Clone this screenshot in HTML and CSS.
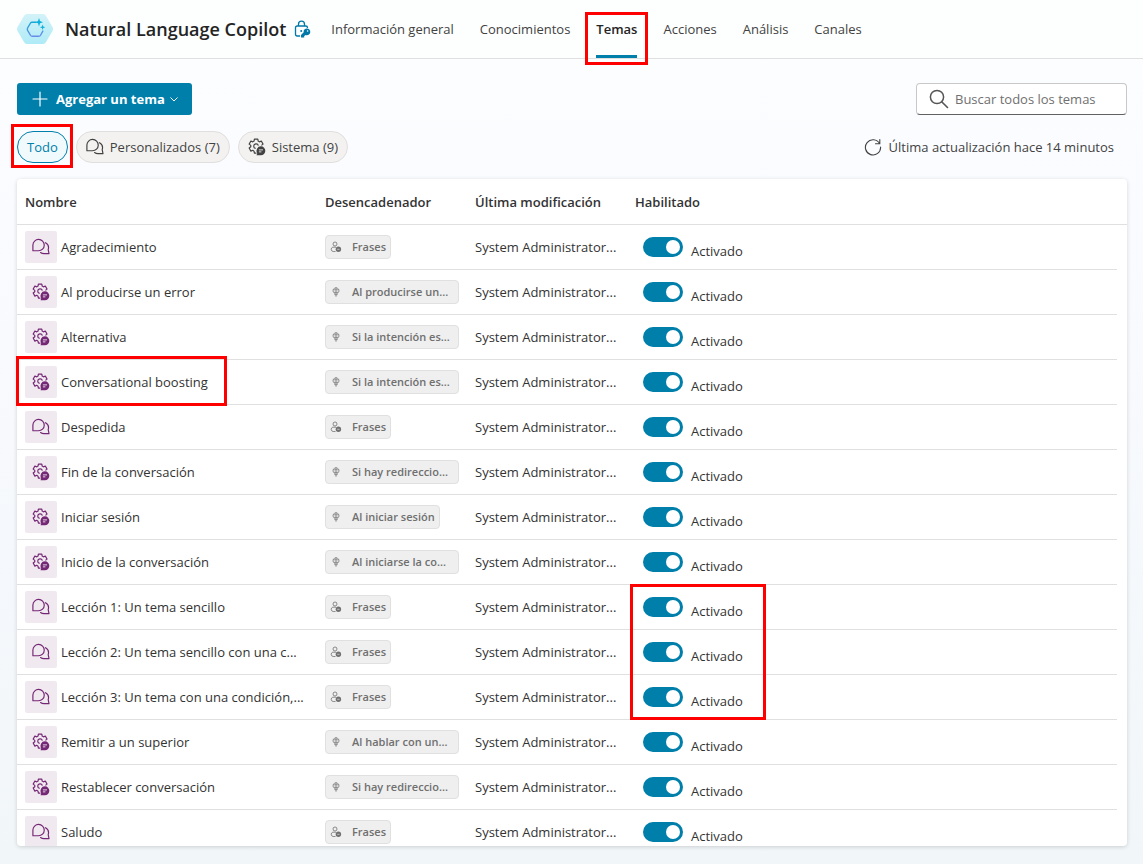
FILE: index.html
```html
<!DOCTYPE html>
<html lang="es">
<head>
  <meta charset="UTF-8" />
  <title>Natural Language Copilot - Temas</title>
  <link rel="stylesheet" href="styles.css">
</head>
<body>

  <!-- Shared icons -->
  <svg class="sprite" aria-hidden="true">
    <symbol id="icon-chat" viewBox="0 0 20 20">
      <path d="M1 14.200V7.800A6.300 6.300 0 1 1 7.300 14.200z" fill="none" stroke="currentColor" stroke-width="1.300" stroke-linejoin="round" />
      <path d="M15 5.200a6.500 6.500 0 0 1 3 7.600l.9 4.600H13.500a6.500 6.500 0 0 1-4-1.200" fill="none" stroke="currentColor" stroke-width="1.300" stroke-linejoin="round" stroke-linecap="round" />
    </symbol>
    <symbol id="icon-system" viewBox="0 0 20 20">
      <path d="M9.400 16.800H7.100L6.700 14.600 5.300 13.700 3.200 14.600 1.300 11.200 3.100 9.800V8.200L1.300 6.800 3.200 3.400 5.300 4.300 6.700 3.400 7.100 1.200h3.800l.4 2.200 1.400.9 2.100-.9 1.900 3.400-1.800 1.400" fill="none" stroke="currentColor" stroke-width="1.300" stroke-linejoin="round" />
      <path d="M8.500 11.600A2.600 2.600 0 1 1 11.500 8.500" fill="none" stroke="currentColor" stroke-width="1.300" />
      <path d="M14.400 9.300a4.900 4.900 0 1 1-.1 9.800H9.500l.7-2.200A4.900 4.900 0 0 1 14.400 9.300z" fill="currentColor" />
      <path d="M12.100 13.200h4.600M12.100 15.400h2.800" stroke="#fff" stroke-width=".9" />
    </symbol>
    <symbol id="icon-phrases" viewBox="0 0 12 12">
      <circle cx="5" cy="3" r="2" fill="none" stroke="currentColor" stroke-width=".8" />
      <path d="M5.500 10.500H3.200a2.200 2.200 0 0 1-.4-4.300H6" fill="none" stroke="currentColor" stroke-width=".8" />
      <circle cx="8.400" cy="8.300" r="2.700" fill="currentColor" />
      <path d="M7.200 8.300h2.400" stroke="#efefef" stroke-width=".6" />
    </symbol>
    <symbol id="icon-event" viewBox="0 0 12 12">
      <path d="M3.400 6.300a3 3 0 1 1 5.200 0H3.400zM3.100 3.800h5.800M6 1.200v9.600M4.800 6.400v2.400h2.400V6.400" fill="none" stroke="currentColor" stroke-width=".7" />
    </symbol>
  </svg>

  <header class="header">
    <svg class="logo" viewBox="0 0 36 32" aria-hidden="true">
      <defs>
        <linearGradient id="hex" x1="0" y1="0" x2="0" y2="1"><stop offset="0" stop-color="#d3f2f8" /><stop offset="1" stop-color="#aeebf7" /></linearGradient>
        <linearGradient id="ring" x1="0" y1="0" x2="0" y2="1"><stop offset="0" stop-color="#19a7d8" /><stop offset="1" stop-color="#6a8ce8" /></linearGradient>
      </defs>
      <path d="M10 1h16q2 0 3 2l6.500 11q1 2 0 4L29 29q-1 2-3 2H10q-2 0-3-2L.5 18q-1-2 0-4L7 3q1-2 3-2z" fill="url(#hex)" />
      <path d="M19 9.200h-4q-1 0-1.500.8L10.600 15q-.6 1.200 0 2.300l3 5.200q.5.800 1.500.8h6.800q1 0 1.500-.8l2.500-4.500" fill="none" stroke="url(#ring)" stroke-width="1.400" stroke-linecap="round" />
      <path d="M22 5l1 3 3 1.200-3 1.100-1 3.200-1-3.200-3-1.100L21 8zM25.600 11.500l.7 2 2 .8-2 .7-.7 2-.7-2-2-.7 2-.8z" fill="#0eb0dc" />
    </svg>
    <h1>Natural Language Copilot</h1>
    <svg class="lock" viewBox="0 0 18 18" aria-hidden="true">
      <path d="M7 16H4.200Q2.500 16 2.500 14.300V7.700Q2.500 6 4.200 6h8.600q1.700 0 1.700 1.700V8M5.500 6V4.200a3 3 0 0 1 6 0V6" fill="none" stroke="currentColor" stroke-width="1.300" />
      <circle cx="8.200" cy="11" r="1" fill="currentColor" />
      <path d="M13.500 8.600a3.300 3.300 0 1 1-.8 6.300L11.200 16v1.500H8v-2.600l2.700-2.600a3.300 3.300 0 0 1 2.800-3.700z" fill="currentColor" />
      <circle cx="14.600" cy="11" r=".8" fill="#fff" />
    </svg>
    <nav class="tabs">
      <a href="#">Información general</a>
      <a href="#">Conocimientos</a>
      <a href="#" class="active mark mark-tab" aria-current="page">Temas</a>
      <a href="#">Acciones</a>
      <a href="#">Análisis</a>
      <a href="#">Canales</a>
    </nav>
  </header>

  <main>
    <div class="toolbar">
      <button class="add">
        <svg width="16" height="16" viewBox="0 0 16 16"><path d="M8 1v14M1 8h14" stroke="#fff" stroke-width="1.200" stroke-linecap="round" /></svg>
        Agregar un tema
        <svg width="8" height="8" viewBox="0 0 8 8"><path d="M.5 2.500L4 6l3.500-3.500" fill="none" stroke="#fff" /></svg>
      </button>
      <div class="search">
        <svg width="20" height="20" viewBox="0 0 20 20"><path d="M12.700 12.700L18.500 18.500" stroke="#555" stroke-width="1.600" stroke-linecap="round" /><circle cx="8" cy="8" r="6.600" fill="none" stroke="#555" stroke-width="1.500" /></svg>
        <input type="text" placeholder="Buscar todos los temas" aria-label="Buscar todos los temas" />
      </div>
    </div>

    <div class="filters">
      <button class="pill selected mark mark-pill">Todo</button>
      <button class="pill"><svg class="icon"><use href="#icon-chat" /></svg>Personalizados (7)</button>
      <button class="pill"><svg class="icon"><use href="#icon-system" /></svg>Sistema (9)</button>
      <button class="refresh">
        <svg width="18" height="18" viewBox="0 0 18 18"><path d="M15.600 5.600A7.600 7.600 0 1 0 16.600 9M15.800 1.500v4.300h-4.300" fill="none" stroke="currentColor" stroke-width="1.100" stroke-linecap="round" /></svg>
        Última actualización hace 14 minutos
      </button>
    </div>

    <div class="card">
      <table>
        <colgroup>
          <col class="col-name">
          <col class="col-trigger">
          <col class="col-modified">
          <col>
          <col class="col-gutter">
        </colgroup>
        <thead>
          <tr>
            <th>Nombre</th>
            <th>Desencadenador</th>
            <th>Última modificación</th>
            <th>Habilitado</th>
            <th></th>
          </tr>
        </thead>
        <tbody>
          <tr>
            <td><div class="name"><span class="tile"><svg class="icon"><use href="#icon-chat" /></svg></span>Agradecimiento</div></td>
            <td><span class="chip"><svg><use href="#icon-phrases" /></svg>Frases</span></td>
            <td>System Administrator...</td>
            <td><div class="toggle"><input type="checkbox" role="switch" id="t1" checked /><label for="t1">Activado</label></div></td>
            <td></td>
          </tr>
          <tr>
            <td><div class="name"><span class="tile"><svg class="icon"><use href="#icon-system" /></svg></span>Al producirse un error</div></td>
            <td><span class="chip wide"><svg><use href="#icon-event" /></svg>Al producirse un...</span></td>
            <td>System Administrator...</td>
            <td><div class="toggle"><input type="checkbox" role="switch" id="t2" checked /><label for="t2">Activado</label></div></td>
            <td></td>
          </tr>
          <tr>
            <td><div class="name"><span class="tile"><svg class="icon"><use href="#icon-system" /></svg></span>Alternativa</div></td>
            <td><span class="chip wide"><svg><use href="#icon-event" /></svg>Si la intención es...</span></td>
            <td>System Administrator...</td>
            <td><div class="toggle"><input type="checkbox" role="switch" id="t3" checked /><label for="t3">Activado</label></div></td>
            <td></td>
          </tr>
          <tr>
            <td><div class="name mark mark-name"><span class="tile"><svg class="icon"><use href="#icon-system" /></svg></span>Conversational boosting</div></td>
            <td><span class="chip wide"><svg><use href="#icon-event" /></svg>Si la intención es...</span></td>
            <td>System Administrator...</td>
            <td><div class="toggle"><input type="checkbox" role="switch" id="t4" checked /><label for="t4">Activado</label></div></td>
            <td></td>
          </tr>
          <tr>
            <td><div class="name"><span class="tile"><svg class="icon"><use href="#icon-chat" /></svg></span>Despedida</div></td>
            <td><span class="chip"><svg><use href="#icon-phrases" /></svg>Frases</span></td>
            <td>System Administrator...</td>
            <td><div class="toggle"><input type="checkbox" role="switch" id="t5" checked /><label for="t5">Activado</label></div></td>
            <td></td>
          </tr>
          <tr>
            <td><div class="name"><span class="tile"><svg class="icon"><use href="#icon-system" /></svg></span>Fin de la conversación</div></td>
            <td><span class="chip wide"><svg><use href="#icon-event" /></svg>Si hay redireccio...</span></td>
            <td>System Administrator...</td>
            <td><div class="toggle"><input type="checkbox" role="switch" id="t6" checked /><label for="t6">Activado</label></div></td>
            <td></td>
          </tr>
          <tr>
            <td><div class="name"><span class="tile"><svg class="icon"><use href="#icon-system" /></svg></span>Iniciar sesión</div></td>
            <td><span class="chip"><svg><use href="#icon-event" /></svg>Al iniciar sesión</span></td>
            <td>System Administrator...</td>
            <td><div class="toggle"><input type="checkbox" role="switch" id="t7" checked /><label for="t7">Activado</label></div></td>
            <td></td>
          </tr>
          <tr>
            <td><div class="name"><span class="tile"><svg class="icon"><use href="#icon-system" /></svg></span>Inicio de la conversación</div></td>
            <td><span class="chip wide"><svg><use href="#icon-event" /></svg>Al iniciarse la co...</span></td>
            <td>System Administrator...</td>
            <td><div class="toggle"><input type="checkbox" role="switch" id="t8" checked /><label for="t8">Activado</label></div></td>
            <td></td>
          </tr>
          <tr>
            <td><div class="name"><span class="tile"><svg class="icon"><use href="#icon-chat" /></svg></span>Lección 1: Un tema sencillo</div></td>
            <td><span class="chip"><svg><use href="#icon-phrases" /></svg>Frases</span></td>
            <td>System Administrator...</td>
            <td><div class="toggle mark mark-toggles"><input type="checkbox" role="switch" id="t9" checked /><label for="t9">Activado</label></div></td>
            <td></td>
          </tr>
          <tr>
            <td><div class="name"><span class="tile"><svg class="icon"><use href="#icon-chat" /></svg></span>Lección 2: Un tema sencillo con una c...</div></td>
            <td><span class="chip"><svg><use href="#icon-phrases" /></svg>Frases</span></td>
            <td>System Administrator...</td>
            <td><div class="toggle"><input type="checkbox" role="switch" id="t10" checked /><label for="t10">Activado</label></div></td>
            <td></td>
          </tr>
          <tr>
            <td><div class="name"><span class="tile"><svg class="icon"><use href="#icon-chat" /></svg></span>Lección 3: Un tema con una condición,...</div></td>
            <td><span class="chip"><svg><use href="#icon-phrases" /></svg>Frases</span></td>
            <td>System Administrator...</td>
            <td><div class="toggle"><input type="checkbox" role="switch" id="t11" checked /><label for="t11">Activado</label></div></td>
            <td></td>
          </tr>
          <tr>
            <td><div class="name"><span class="tile"><svg class="icon"><use href="#icon-system" /></svg></span>Remitir a un superior</div></td>
            <td><span class="chip wide"><svg><use href="#icon-event" /></svg>Al hablar con un...</span></td>
            <td>System Administrator...</td>
            <td><div class="toggle"><input type="checkbox" role="switch" id="t12" checked /><label for="t12">Activado</label></div></td>
            <td></td>
          </tr>
          <tr>
            <td><div class="name"><span class="tile"><svg class="icon"><use href="#icon-system" /></svg></span>Restablecer conversación</div></td>
            <td><span class="chip wide"><svg><use href="#icon-event" /></svg>Si hay redireccio...</span></td>
            <td>System Administrator...</td>
            <td><div class="toggle"><input type="checkbox" role="switch" id="t13" checked /><label for="t13">Activado</label></div></td>
            <td></td>
          </tr>
          <tr>
            <td><div class="name"><span class="tile"><svg class="icon"><use href="#icon-chat" /></svg></span>Saludo</div></td>
            <td><span class="chip"><svg><use href="#icon-phrases" /></svg>Frases</span></td>
            <td>System Administrator...</td>
            <td><div class="toggle"><input type="checkbox" role="switch" id="t14" checked /><label for="t14">Activado</label></div></td>
            <td></td>
          </tr>
        </tbody>
      </table>
    </div>
  </main>

</body>
</html>
```
FILE: styles.css
```css
*, *::before, *::after {
  box-sizing: border-box;
}
body {
  margin: 0;
  height: 100vh;
  display: flex;
  flex-direction: column;
  font-family: "Open Sans", "Noto Sans", sans-serif;
  font-size: 13px;
  line-height: 20px;
  color: #333;
  background: linear-gradient(#fdfeff, #fafbff 25%, #f1f6f9);
}
button, input {
  font: inherit;
  color: inherit;
}
button {
  cursor: pointer;
}
.sprite {
  position: absolute;
  width: 0;
  height: 0;
}
.icon {
  width: 18px;
  height: 18px;
}

/* Header */
.header {
  display: flex;
  align-items: center;
  flex: none;
  height: 59px;
  padding-left: 17px;
  border-bottom: 1px solid #e0e0e0;
  background: #fdfefe;
}
.logo {
  width: 36px;
  height: 32px;
}
h1 {
  margin: 0 7px 0 12px;
  font-size: 18px;
  line-height: 24px;
  font-weight: 600;
  color: #242424;
  white-space: nowrap;
}
.lock {
  width: 18px;
  height: 18px;
  color: #0078a8;
}
.tabs {
  display: flex;
  gap: 26px;
  margin-left: 20px;
}
.tabs a {
  padding: 19px 0;
  line-height: 20px;
  color: #424242;
  text-decoration: none;
  white-space: nowrap;
}
.tabs .active {
  font-weight: 600;
  color: #242424;
  box-shadow: inset 0 -3px #007fab;
}

/* Red callout frames */
.mark {
  position: relative;
}
.mark::after {
  content: "";
  position: absolute;
  z-index: 1;
  border: 3px solid #f00;
  pointer-events: none;
}
.mark-tab::after {
  inset: 12px -11px -7px;
}
.mark-pill::after {
  inset: -8px -6px -6px -7px;
}
.mark-name::after {
  inset: -10px auto -8px -9px;
  width: 211px;
}
.mark-toggles::after {
  top: -13px;
  left: -13px;
  width: 136px;
  height: 136px;
}

/* Actions */
main {
  flex: 1;
  min-height: 0;
  display: flex;
  flex-direction: column;
  gap: 16px;
  padding: 24px 16px 18px 17px;
}
.toolbar {
  display: flex;
  justify-content: space-between;
}
.add {
  display: flex;
  align-items: center;
  height: 32px;
  padding: 0 14px 0 15px;
  border: none;
  border-radius: 3px;
  background: #007fab;
  color: #fff;
  font-weight: 700;
}
.add svg:first-child {
  margin-right: 8px;
}
.add svg:last-child {
  margin-left: 5px;
}
.search {
  display: flex;
  align-items: center;
  gap: 6px;
  width: 211px;
  height: 32px;
  padding: 0 12px;
  border: 1px solid #c8c8c8;
  border-bottom-color: #616161;
  border-radius: 4px;
  background: #fff;
}
.search svg {
  flex: none;
}
.search input {
  width: 100%;
  min-width: 0;
  padding: 0;
  border: none;
  outline: none;
  background: none;
}
.search input::placeholder {
  color: #707070;
}
.filters {
  display: flex;
  gap: 8px;
}
.pill {
  display: flex;
  align-items: center;
  gap: 6px;
  height: 32px;
  padding: 0 9px;
  border: 1px solid #e1dfdd;
  border-radius: 16px;
  background: #f3f2f1;
  color: #424242;
}
.pill.selected {
  border-color: #007fab;
  background: #f0f9fc;
  color: #007fab;
}
.refresh {
  display: flex;
  align-items: center;
  gap: 7px;
  margin-left: auto;
  padding: 0 13px;
  border: none;
  background: none;
  color: #424242;
}

/* Topics table */
.card {
  flex: 1;
  min-height: 0;
  overflow: visible clip;
  border-radius: 4px;
  background: #fff;
  box-shadow: 0 1px 4px rgba(0, 0, 0, 0.16);
}
table {
  width: 100%;
  table-layout: fixed;
  border-collapse: separate;
  border-spacing: 0;
}
.col-name {
  width: 300px;
}
.col-trigger {
  width: 150px;
}
.col-modified {
  width: 160px;
}
.col-gutter {
  width: 10px;
}
th, td {
  height: 45px;
  padding: 0 8px;
  border-bottom: 1px solid #e0e0e0;
  text-align: left;
  white-space: nowrap;
}
th {
  height: 46px;
  font-weight: 600;
}
th:last-child, td:last-child {
  padding: 0;
}
td:last-child {
  border-bottom: none;
}
.name {
  display: flex;
  align-items: center;
  gap: 4px;
}
.tile {
  display: flex;
  align-items: center;
  justify-content: center;
  width: 32px;
  height: 32px;
  border-radius: 2px;
  background: #f1e9f0;
  color: #742774;
}
.chip {
  display: flex;
  align-items: center;
  gap: 10px;
  width: fit-content;
  height: 24px;
  padding: 0 4px;
  border: 1px solid #e0e0e0;
  border-radius: 4px;
  background: #efefef;
  color: #707070;
  font-size: 11px;
  font-weight: 600;
}
.chip.wide {
  width: 134px;
}
.chip svg {
  width: 12px;
  height: 12px;
}
.toggle {
  display: flex;
  gap: 8px;
  margin-left: 8px;
}
.toggle input {
  appearance: none;
  width: 40px;
  height: 20px;
  margin: 0;
  padding: 3px;
  border-radius: 10px;
  background: #8a8a8a;
}
.toggle input:checked {
  background: #007fab;
}
.toggle input::before {
  content: "";
  display: block;
  width: 14px;
  height: 14px;
  border-radius: 50%;
  background: #fff;
}
.toggle input:checked::before {
  margin-left: auto;
}
.toggle label {
  height: 20px;
  line-height: 28px;
}
```
